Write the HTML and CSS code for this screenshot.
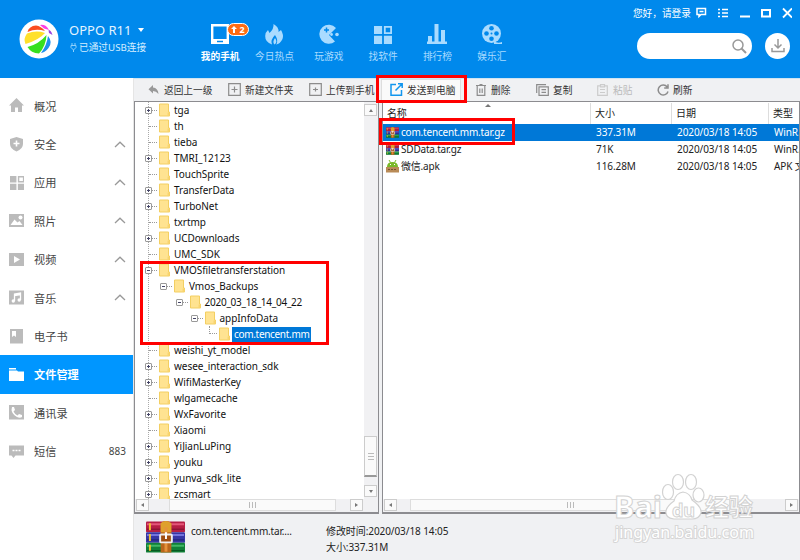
FILE: index.html
```html
<!DOCTYPE html>
<html lang="zh-CN">
<head>
    <meta charset="UTF-8">
    <meta name="viewport" content="width=device-width, initial-scale=1.0">
    <title>手机助手 - 文件管理</title>
    <link rel="stylesheet" href="styles.css">
</head>
<body>
    <!-- 图标 -->
    <svg class="symbols" width="0" height="0">
        <symbol id="chevron" viewBox="0 0 12 7"><path d="M1 6L6 1.2L11 6" fill="none" stroke="#999" stroke-width="1.3"/></symbol>
        <symbol id="grid" viewBox="0 0 20 20"><path d="M0 0h9v9H0zM0 11h9v9H0zM11 11h9v9h-9z"/><path d="M12 1h7v7h-7z" fill="none" stroke="currentColor" stroke-width="2"/></symbol>
        <symbol id="folder" viewBox="0 0 11 13"><path d="M.5.5h9v8h1v4H.5z" fill="#ffe391" stroke="#f3cf62"/><path d="M8.5 9h2v3.5h-2z" fill="#f8d470"/></symbol>
        <symbol id="rar" viewBox="0 0 40 34">
            <rect y="1" width="40" height="11" rx="1" fill="#b51f45"/><path d="M1 4h38" stroke="#e5577a" stroke-width="2"/><path d="M1 9h38" stroke="#7c1030"/>
            <rect y="12" width="40" height="11" rx="1" fill="#3636a4"/><path d="M1 15h38" stroke="#7474dc" stroke-width="2"/><path d="M1 20h38" stroke="#1f1f70"/>
            <rect y="23" width="40" height="10" rx="1" fill="#118138"/><path d="M1 26h38" stroke="#41b765" stroke-width="2"/><path d="M1 31h38" stroke="#07501f"/>
            <path d="M4 3v7M4 14v7M4 25v6" stroke="#f3c22e" stroke-width="2"/>
            <path d="M15 3q5-5 11 0v30H15z" fill="#b9661b"/><path d="M15 3q5-5 11 0v9H15z" fill="#dfa02c"/><path d="M20.500 7v25" stroke="#e5923b" stroke-width="3"/>
            <rect x="14.500" y="14.500" width="12" height="8" rx="1" fill="#a04d10" stroke="#eee" stroke-width="2"/><path d="M20.500 12v7" stroke="#fff" stroke-width="2"/>
        </symbol>
    </svg>

    <header class="header">
        <svg class="avatar" viewBox="0 0 40 40">
            <circle cx="20" cy="20" r="19.500" fill="#fff"/>
            <path d="M8.500 13Q10 7 17 6.500Q22 7 26 12Q17 9 8.500 13z" fill="#fb4d20"/>
            <path d="M8 14.500Q17 11 26 14Q20 21 6.500 25Q4 20 8 14.500z" fill="#ffe02a"/>
            <path d="M27.500 16Q27 27 20 34.500Q12 34 8.500 28Q20 25 27.500 16z" fill="#37e01f"/>
            <path d="M29 17Q34 23 29.500 29Q26 33.500 22 34Q28 26 29 17z" fill="#1f90ee"/>
            <path d="M21 6Q27 5 30 11L25 9.500z" fill="#fb3fe3"/>
            <path d="M29.500 11Q32 11 33.500 16L30 14z" fill="#9a44dd"/>
        </svg>
        <div class="device">
            <div class="device-name">OPPO R11<span class="caret"></span></div>
            <div class="device-state">
                <svg width="7" height="9" viewBox="0 0 7 9" fill="none" stroke="#8fd0fb"><path d="M2 0v2M5 0v2M1 2.500h5v2L3.500 7L1 4.500zM3.500 7v2"/></svg>
                <span>已通过USB连接</span>
            </div>
        </div>

        <ul class="nav">
            <li class="active">
                <svg width="20" height="22" viewBox="0 0 20 22"><path d="M2.200 2.200h15.600v17.600H2.200z" fill="none" stroke="#fff" stroke-width="2.400"/><path d="M2 16h16v4H2z"/><path d="M7 18.500h6" stroke="#0089ec" stroke-width="1.500"/></svg>
                <span>我的手机</span>
                <em class="badge"><svg width="6" height="7" viewBox="0 0 6 7"><path d="M3 0l3 3H4v4H2V3H0z"/></svg>2</em>
            </li>
            <li>
                <svg width="20" height="22" viewBox="0 0 20 22"><path d="M9.500 1Q15 4 14.500 9L17 7Q20 12 18.500 16Q16 21 12 21.500Q15 18 11 12Q6 17 8 21.500Q1 19 1.200 13Q1.500 9 4 7L5.500 10Q10 6 9.500 1zM11 15Q14 19 10.500 21.500Q8 19 11 15z"/></svg>
                <span>今日热点</span>
            </li>
            <li>
                <svg width="20" height="22" viewBox="0 0 20 22"><path d="M17 5A9.500 9.500 0 1 0 16 18.500L10 12z"/><path d="M5 7h5M7.500 4.500v5" stroke="#0089ec" stroke-width="1.500"/><circle cx="12.500" cy="11.500" r="1.400"/><circle cx="18" cy="11.500" r="1.800"/></svg>
                <span>玩游戏</span>
            </li>
            <li>
                <svg width="18" height="22" viewBox="0 -1 20 22"><use href="#grid"/></svg>
                <span>找软件</span>
            </li>
            <li>
                <svg width="20" height="22" viewBox="0 0 20 22"><path d="M1 13h4v6H1zM7.500 1h4v18h-4zM14 7h4v12h-4zM0 18.500h20V21H0z"/></svg>
                <span>排行榜</span>
            </li>
            <li>
                <svg width="20" height="22" viewBox="0 0 20 22"><circle cx="9.500" cy="10.500" r="9.500"/><path d="M12 18.500q4 2 8 .5v2h-8z"/><g fill="#0089ec"><circle cx="9.500" cy="5.300" r="2.300"/><circle cx="4.500" cy="10.500" r="2.300"/><circle cx="14.500" cy="10.500" r="2.300"/><circle cx="9.500" cy="15.700" r="2.300"/><circle cx="9.500" cy="10.500" r="1"/></g></svg>
                <span>娱乐汇</span>
            </li>
        </ul>

        <div class="header-right">
            <div class="window-bar">
                <span class="login">您好，请登录</span>
                <svg width="96" height="12" viewBox="0 0 96 12" fill="none" stroke="#fff" stroke-width="1.500">
                    <path d="M1 1.500h8.500v6H5L3 9.500v-2H1zM3.500 4.500h4"/>
                    <path d="M22 2.500h2M22 6h2M22 9.500h2M26 2.500h6M26 6h6M26 9.500h6"/>
                    <path d="M44 9.500h10" stroke-width="2"/>
                    <path d="M66 3h8v6.500h-8z" stroke-width="2"/>
                    <path d="M87 1.500l9 9M96 1.500l-9 9" stroke-width="1.800"/>
                </svg>
            </div>
            <div class="search-row">
                <div class="search"><svg width="15" height="15" viewBox="0 0 15 15" fill="none" stroke="#999"><circle cx="6" cy="6" r="5" stroke-width="1.500"/><path d="M9.500 9.500l4.500 4.500" stroke-width="2"/></svg></div>
                <div class="download"><svg width="14" height="14" viewBox="0 0 14 14" fill="none" stroke="#999" stroke-width="1.500"><path d="M7 0v8.500M3.500 5.500L7 9l3.500-3.500M1 9v3.500h12V9"/></svg></div>
            </div>
        </div>
    </header>

    <div class="container">
        <ul class="sidebar">
            <li><svg class="side-icon" viewBox="0 0 15 15"><path d="M7.500 0L15 7.500h-2V14H9V9.500H6V14H2V7.500H0z"/></svg><span>概况</span></li>
            <li><svg class="side-icon" viewBox="0 0 15 15"><path d="M7.500 0l6.500 2v5q0 5-6.500 7.500Q1 12 1 7V2z"/><path d="M4.500 6.500h6M7.500 3.500v6" stroke="#fff" stroke-width="1.600"/></svg><span>安全</span><svg class="chevron"><use href="#chevron"/></svg></li>
            <li><svg class="side-icon" viewBox="-1 -1 23 22"><use href="#grid"/></svg><span>应用</span><svg class="chevron"><use href="#chevron"/></svg></li>
            <li><svg class="side-icon" viewBox="0 0 15 15"><path d="M0 1h15v13H0z"/><path d="M1.500 12l4-5.500 3 3 2-1.500 3 4z" fill="#fff"/><circle cx="11.500" cy="4.500" r="2" fill="#fff"/></svg><span>照片</span><svg class="chevron"><use href="#chevron"/></svg></li>
            <li><svg class="side-icon" viewBox="0 0 15 15"><path d="M0 1h15v13H0z"/><path d="M5 4l6 3.500L5 11z" fill="#fff"/></svg><span>视频</span><svg class="chevron"><use href="#chevron"/></svg></li>
            <li><svg class="side-icon" viewBox="0 0 15 15"><path d="M0 .5h15v14H0z"/><path d="M5.500 11V4l6-1v7M5.500 5.500l6-1" fill="none" stroke="#fff" stroke-width="1.300"/><circle cx="4.300" cy="11" r="1.700" fill="#fff"/><circle cx="10.200" cy="10" r="1.700" fill="#fff"/></svg><span>音乐</span><svg class="chevron"><use href="#chevron"/></svg></li>
            <li><svg class="side-icon" viewBox="0 0 15 15"><path d="M1 0h13v14.500H1z"/><path d="M3 2h4v6L5 6.500 3 8z" fill="#fff"/></svg><span>电子书</span></li>
            <li class="active"><svg class="side-icon" viewBox="0 0 15 15"><path d="M0 1h7v1.500H0zM0 3.500h8l1 1h6V14H0z"/></svg><span>文件管理</span></li>
            <li><svg class="side-icon" viewBox="0 0 15 15"><path d="M0 0h15v14.500H0z"/><path d="M3 2l2 0 1 3-1.500 1.500q1.500 3 4 4L10 9l3 1v2q-2 1.500-5 0Q3 9 2.500 5z" fill="#fff"/></svg><span>通讯录</span></li>
            <li><svg class="side-icon" viewBox="0 0 15 15"><path d="M0 1.500h15v10H6.500L4.500 14 2.500 11.500H0z"/><path d="M3.500 6.500h2M6.500 6.500h2M9.500 6.500h2" stroke="#fff" stroke-width="1.600"/></svg><span>短信</span><b class="count">883</b></li>
        </ul>

        <div class="main">
            <div class="toolbar">
                <a class="tool back"><svg width="11" height="10" viewBox="0 0 11 10"><path d="M5 0v2.500q5 .5 5.500 6.500Q8 6 5 6v2.500L.5 4.200z" fill="#999"/></svg>返回上一级</a>
                <a class="tool new-folder"><svg width="13" height="13" viewBox="0 0 13 13"><path d="M.7.7h11.600v11.600H.7zM3.500 6.500h6M6.500 3.500v6"/></svg>新建文件夹</a>
                <a class="tool upload"><svg width="13" height="13" viewBox="0 0 13 13"><path d="M.7.7h11.600v11.600H.7zM4 6.500h5M6.500 4.500v4"/></svg>上传到手机</a>
                <a class="tool send"><svg width="13" height="13" viewBox="0 0 13 13"><path d="M6 1.500H1v10.700h10.500V7M5.500 7.500L12 1M8 .8h4.200V5"/></svg>发送到电脑</a>
                <a class="tool delete"><svg width="10" height="12" viewBox="0 0 10 12"><path d="M0 1.500h10M3.500.7h3M1.200 2v9.300h7.600V2M3.800 4.500v4.500M6.200 4.500v4.500"/></svg>删除</a>
                <a class="tool copy"><svg width="13" height="12" viewBox="0 0 13 12"><path d="M10 .6H.7V9M3 2.800h9.300v8.600H3zM5.500 5.700h4.500M5.500 8.300h4.500"/></svg>复制</a>
                <a class="tool paste"><svg width="11" height="12" viewBox="0 0 11 12"><path d="M3 1.800H.7v9.600h9.600V1.800H8M3.500.7h4v2.200h-4zM3 5.500h5M3 8.500h5"/></svg>粘贴</a>
                <a class="tool refresh"><svg width="12" height="12" viewBox="0 0 12 12"><path d="M10.200 3A5 5 0 1 0 11 7.500M11 .3V4H7.200" stroke-width="1.500"/></svg>刷新</a>
            </div>

            <div class="panels">
                <div class="panel tree-panel">
                    <div class="tree-body">
                        <ul class="tree">
                            <li class="plus"><svg><use href="#folder"/></svg><span>tga</span></li>
                            <li><svg><use href="#folder"/></svg><span>th</span></li>
                            <li><svg><use href="#folder"/></svg><span>tieba</span></li>
                            <li class="plus"><svg><use href="#folder"/></svg><span>TMRI_12123</span></li>
                            <li><svg><use href="#folder"/></svg><span>TouchSprite</span></li>
                            <li class="plus"><svg><use href="#folder"/></svg><span>TransferData</span></li>
                            <li class="plus"><svg><use href="#folder"/></svg><span>TurboNet</span></li>
                            <li><svg><use href="#folder"/></svg><span>txrtmp</span></li>
                            <li class="plus"><svg><use href="#folder"/></svg><span>UCDownloads</span></li>
                            <li><svg><use href="#folder"/></svg><span>UMC_SDK</span></li>
                            <li class="minus"><svg><use href="#folder"/></svg><span>VMOSfiletransferstation</span></li>
                            <li class="minus level-1"><svg><use href="#folder"/></svg><span>Vmos_Backups</span></li>
                            <li class="minus level-2"><svg><use href="#folder"/></svg><span>2020_03_18_14_04_22</span></li>
                            <li class="minus level-3"><svg><use href="#folder"/></svg><span>appInfoData</span></li>
                            <li class="level-4 selected"><svg><use href="#folder"/></svg><span>com.tencent.mm</span></li>
                            <li><svg><use href="#folder"/></svg><span>weishi_yt_model</span></li>
                            <li class="plus"><svg><use href="#folder"/></svg><span>wesee_interaction_sdk</span></li>
                            <li class="plus"><svg><use href="#folder"/></svg><span>WifiMasterKey</span></li>
                            <li><svg><use href="#folder"/></svg><span>wlgamecache</span></li>
                            <li class="plus"><svg><use href="#folder"/></svg><span>WxFavorite</span></li>
                            <li><svg><use href="#folder"/></svg><span>Xiaomi</span></li>
                            <li class="plus"><svg><use href="#folder"/></svg><span>YiJianLuPing</span></li>
                            <li class="plus"><svg><use href="#folder"/></svg><span>youku</span></li>
                            <li class="plus"><svg><use href="#folder"/></svg><span>yunva_sdk_lite</span></li>
                            <li class="plus"><svg><use href="#folder"/></svg><span>zcsmart</span></li>
                        </ul>
                        <div class="scroll-y"><i class="arrow up"></i><i class="thumb-y"></i><i class="arrow down"></i></div>
                    </div>
                    <div class="scroll-x"><i class="arrow left"></i><i class="thumb-x"></i><i class="arrow right"></i></div>
                </div>

                <div class="panel file-panel">
                    <i class="sort"></i>
                    <div class="files">
                        <div class="file-row file-head"><span>名称</span><span>大小</span><span>日期</span><span>类型</span></div>
                        <div class="file-row selected"><span><svg class="file-icon"><use href="#rar"/></svg>com.tencent.mm.tar.gz</span><span>337.31M</span><span>2020/03/18 14:05</span><span>WinR.</span></div>
                        <div class="file-row"><span><svg class="file-icon"><use href="#rar"/></svg>SDData.tar.gz</span><span>71K</span><span>2020/03/18 14:05</span><span>WinR.</span></div>
                        <div class="file-row"><span><svg class="file-icon" viewBox="0 0 13 13"><path d="M1 7Q1 2 6.500 2T12 7z" fill="#79b829"/><path d="M3 0l1.500 2.500M10 0L8.500 2.500" stroke="#79b829"/><path d="M4 4.500h1M8 4.500h1" stroke="#fff"/><path d="M0 7h13v5.500H0z" fill="#b98b57"/><path d="M2 9.500h9" stroke="#76502b" stroke-dasharray="2 1"/></svg>微信.apk</span><span>116.28M</span><span>2020/03/18 14:05</span><span>APK 文</span></div>
                    </div>
                    <div class="scroll-x"><i class="arrow left"></i><i class="thumb-x"></i><i class="arrow right"></i></div>
                </div>
            </div>

            <div class="detail">
                <svg class="detail-icon"><use href="#rar"/></svg>
                <div class="detail-name">com.tencent.mm.tar....</div>
                <div class="detail-info">
                    <p>修改时间:2020/03/18 14:05</p>
                    <p>大小:337.31M</p>
                </div>
            </div>
        </div>
    </div>

    <!-- 红框标注 -->
    <div class="mark mark-tree"></div>
    <div class="mark mark-send"></div>
    <div class="mark mark-file"></div>

    <!-- 水印 -->
    <svg class="watermark" width="148" height="76" viewBox="0 0 148 76">
        <g fill="#fff" stroke="#d2d2d2" stroke-width="1.200">
            <ellipse cx="57" cy="19" rx="5.500" ry="7.500"/><ellipse cx="67" cy="9" rx="5.500" ry="7.500"/>
            <ellipse cx="80" cy="9" rx="5.500" ry="7.500"/><ellipse cx="87.500" cy="22" rx="5.500" ry="7"/>
            <path d="M72 19Q79 20 81 27Q91 34 90 40Q88 46 81 46H63Q54 45 55 38Q56 33 63 28Q65 20 72 19z"/>
        </g>
        <g class="wm-text">
            <text x="3" y="45" font-size="31" textLength="48" lengthAdjust="spacingAndGlyphs">Bai</text>
            <text x="61" y="44" font-size="18" textLength="23">du</text>
            <text x="94" y="43" font-size="24" textLength="48" lengthAdjust="spacingAndGlyphs">经验</text>
        </g>
        <text class="wm-url" x="4" y="65" font-size="15.500" textLength="139" lengthAdjust="spacingAndGlyphs">jingyan.baidu.com</text>
    </svg>
</body>
</html>
```

FILE: styles.css
```css
*,
*::before,
*::after {
    margin: 0;
    padding: 0;
    box-sizing: border-box;
}

body {
    width: 800px;
    height: 560px;
    overflow: hidden;
    position: relative;
    background-color: #fff;
    color: #222;
    font-family: "Noto Sans", "Noto Sans CJK SC", sans-serif;
    font-size: 10px;
}

ul {
    list-style: none;
}

svg {
    display: block;
    flex-shrink: 0;
}

.symbols {
    position: absolute;
}

/* 顶部 */
.header {
    display: flex;
    height: 78px;
    background-color: #0089ec;
    color: #fff;
}

.avatar {
    width: 40px;
    height: 40px;
    margin: 19px 0 0 19px;
}

.device {
    width: 134px;
    padding: 21px 0 0 10px;
}

.device-name {
    display: flex;
    align-items: center;
    height: 18px;
    font-size: 13px;
    color: #e4f4ff;
}

.caret {
    margin-left: 7px;
    border: 3.5px solid transparent;
    border-top: 4px solid #fff;
    border-bottom: 0;
}

.device-state {
    display: flex;
    align-items: center;
    gap: 2px;
    height: 16px;
    font-size: 9.7px;
    color: #d3edff;
    padding-left: 1px;
    white-space: nowrap;
}

.nav {
    display: flex;
    padding-top: 23px;
    width: 326px;
}

.nav li {
    display: flex;
    flex-direction: column;
    align-items: center;
    gap: 3px;
    flex: 1;
    position: relative;
    color: #a9dbff;
    fill: currentColor;
    font-size: 9.7px;
    line-height: 17px;
    white-space: nowrap;
}

.nav li.active {
    color: #fff;
    font-weight: bold;
}

.badge {
    display: flex;
    align-items: center;
    justify-content: center;
    gap: 2px;
    position: absolute;
    left: 34px;
    top: 0;
    width: 22px;
    height: 13px;
    border: 1px solid #fff;
    border-radius: 7px;
    background-color: #ff6c12;
    font-style: normal;
    font-size: 9px;
}

.header-right {
    flex: 1;
}

.window-bar {
    display: flex;
    align-items: center;
    justify-content: flex-end;
    gap: 5px;
    height: 26px;
    padding-right: 8px;
}

.login {
    font-size: 9.7px;
    white-space: nowrap;
}

.search-row {
    display: flex;
    justify-content: flex-end;
    gap: 13px;
    padding: 7px 10px 0 0;
}

.search {
    display: flex;
    align-items: center;
    justify-content: flex-end;
    width: 115px;
    height: 26px;
    padding-right: 5px;
    border-radius: 13px;
    background-color: #fff;
}

.download {
    display: flex;
    align-items: center;
    justify-content: center;
    width: 25px;
    height: 26px;
    border-radius: 50%;
    background-color: #fff;
}

.container {
    display: flex;
    height: 482px;
}

/* 左侧菜单 */
.sidebar {
    width: 134px;
    padding-top: 8.5px;
    border-right: 1px solid #e5e5e5;
}

.sidebar li {
    display: flex;
    align-items: center;
    height: 38.4px;
    padding: 0 7px 0 8.5px;
    font-size: 11.2px;
    color: #444;
    fill: #bbb;
}

.side-icon {
    width: 15px;
    height: 15px;
    margin-right: 10.5px;
    color: #bbb;
}

.sidebar li.active {
    background-color: #0096ff;
    color: #fff;
    fill: #fff;
    font-weight: bold;
}

.chevron {
    width: 12px;
    height: 7px;
    margin-left: auto;
}

.count {
    margin-left: auto;
    font-size: 10px;
    font-weight: normal;
}

/* 工具栏 */
.main {
    display: flex;
    flex-direction: column;
    width: 666px;
    background-color: #f0f1f3;
}

.toolbar {
    display: flex;
    align-items: center;
    height: 23px;
    padding: 0 0 1px 14px;
    border-top: 1px solid #cfe4f3;
}

.tool {
    display: flex;
    align-items: center;
    gap: 4px;
    flex-shrink: 0;
    font-size: 9.7px;
    color: #333;
    white-space: nowrap;
}

.tool svg {
    fill: none;
    stroke: #8c8c8c;
    stroke-width: 1.2;
}

.tool.back svg {
    stroke: none;
}

.back {
    width: 80px;
    gap: 5px;
}

.new-folder {
    width: 81px;
}

.upload {
    width: 72px;
}

.send {
    width: 80px;
    height: 22px;
    margin-right: 15px;
    padding-left: 8px;
    background-color: #fafafa;
    border: 1px solid #ddd;
}

.tool.send svg {
    stroke: #1296ee;
    stroke-width: 1.5;
}

.delete {
    width: 60px;
    gap: 5px;
}

.copy {
    width: 61px;
}

.paste {
    width: 60px;
    gap: 5px;
    color: #bbb;
}

.tool.paste svg {
    stroke: #ccc;
}

/* 面板 */
.panels {
    display: flex;
    gap: 3px;
    height: 413px;
}

.panel {
    display: flex;
    flex-direction: column;
    position: relative;
    background-color: #fff;
    border: 1px solid #8c8c90;
    border-bottom-width: 2px;
    overflow: hidden;
}

.tree-panel {
    width: 245px;
}

.file-panel {
    width: 418px;
}

.tree-body {
    display: flex;
    height: 397px;
    overflow: hidden;
}

.tree {
    flex: 1;
    padding-left: 14px;
    background: repeating-linear-gradient(#aaa 0 1px, transparent 1px 2px) 13px 0 / 1px 100% no-repeat;
    letter-spacing: -0.05px;
}

.tree li {
    display: flex;
    align-items: center;
    height: 16px;
    position: relative;
    white-space: nowrap;
    color: #111;
}

.tree li::before {
    content: "";
    width: 8px;
    margin-right: 2px;
    border-top: 1px dotted #999;
}

.tree svg {
    width: 11px;
    height: 14px;
}

.tree span {
    margin-left: 2px;
    padding: 0 2px;
    line-height: 15px;
}

.plus::after,
.minus::after {
    content: "";
    position: absolute;
    left: -4px;
    top: 5px;
    width: 7px;
    height: 7px;
    border: 1px solid #999;
    border-radius: 1px;
    background: linear-gradient(#446, #446) center / 3px 1px no-repeat, linear-gradient(#446, #446) center / 1px 3px no-repeat, #fff;
}

.tree .minus::after {
    background: linear-gradient(#446, #446) center / 3px 1px no-repeat, #fff;
}

.level-1 {
    left: 15px;
}

.level-2 {
    left: 30.5px;
    letter-spacing: -0.25px;
}

.level-3 {
    left: 45.5px;
}

.level-4 {
    left: 60px;
    letter-spacing: -0.32px;
}

.level-4::before {
    height: 8px;
    margin-top: -8px;
}

.tree li.level-4::before {
    border-top: 0;
    border-left: 1px dotted #999;
    border-bottom: 1px dotted #999;
}

.tree li.selected {
    color: #fff;
}

.tree .selected span {
    background-color: #0078d7;
}

/* 滚动条 */
.scroll-y {
    display: flex;
    flex-direction: column;
    width: 14px;
    padding: 2px 1px 1px 0;
    background-color: #f1f1f3;
}

.scroll-x {
    display: flex;
    height: 13px;
    margin-top: auto;
    padding: 0 1px;
    background-color: #f1f1f3;
}

.tree-panel .scroll-x {
    padding-right: 15px;
}

.arrow,
.thumb-x,
.thumb-y {
    display: flex;
    align-items: center;
    justify-content: center;
    flex-shrink: 0;
    background-color: #fafafa;
    border: 1px solid #ccc;
}

.arrow {
    width: 13px;
    height: 12px;
}

.arrow::before {
    content: "";
    border: 2px solid transparent;
}

.up::before {
    border-bottom: 3px solid #777;
    border-top: 0;
}

.down::before {
    border-top: 3px solid #777;
    border-bottom: 0;
}

.left::before {
    border-right: 3px solid #777;
    border-left: 0;
}

.right::before {
    border-left: 3px solid #777;
    border-right: 0;
}

.right {
    margin-left: auto;
}

.thumb-y {
    width: 13px;
    height: 41px;
    margin-top: 320px;
    margin-bottom: 8px;
    border-bottom: 2px solid #999;
}

.thumb-x {
    width: 167px;
    height: 12px;
    margin-left: 20px;
    border-color: #ddd;
}

.file-panel .thumb-x {
    width: 320px;
    margin-left: 13px;
}

.thumb-x::before {
    content: "";
    width: 7px;
    height: 6px;
    background: repeating-linear-gradient(90deg, #bbb 0 1px, transparent 1px 3px);
}

.thumb-y::before {
    content: "";
    width: 6px;
    height: 7px;
    background: repeating-linear-gradient(#bbb 0 1px, transparent 1px 3px);
}

/* 文件列表 */
.sort {
    position: absolute;
    left: 102px;
    top: 2px;
    border: 3px solid transparent;
    border-top: 0;
    border-bottom: 3px solid #777;
}

.file-row {
    display: grid;
    grid-template-columns: 209px 81px 97px 27px;
    height: 17px;
    padding-left: 3px;
    line-height: 17px;
    letter-spacing: -0.08px;
}

.file-row span {
    display: flex;
    align-items: center;
    padding-left: 1px;
    white-space: nowrap;
}

.file-row span:first-child {
    padding-left: 0;
    gap: 2px;
    letter-spacing: -0.2px;
}

.file-row span:last-child {
    letter-spacing: -0.1px;
}

.file-head {
    height: 22px;
    padding-top: 1px;
}

.file-head span {
    background: linear-gradient(#ddd, #ddd) right 4px top 0 / 1px 100% no-repeat;
    padding-left: 0;
}

.file-row.file-head span:first-child {
    padding-left: 1px;
}

.file-head span:last-child {
    background: none;
}

.file-row.selected {
    background-color: #0078d7;
    color: #fff;
}

.file-icon {
    width: 13px;
    height: 13px;
}

/* 底部信息 */
.detail {
    display: flex;
    padding: 6px 0 0 12px;
    line-height: 16px;
}

.detail-icon {
    width: 39px;
    height: 34px;
}

.detail-name {
    width: 141px;
    padding: 3px 0 0 6px;
    letter-spacing: -0.2px;
}

.detail-info {
    padding-top: 3px;
    letter-spacing: -0.08px;
}

/* 标注框 */
.mark {
    position: absolute;
    border: 3px solid #ff0000;
}

.mark-tree {
    left: 140px;
    top: 261px;
    width: 189px;
    height: 84px;
}

.mark-send {
    left: 376px;
    top: 75px;
    width: 91px;
    height: 28px;
}

.mark-file {
    left: 379px;
    top: 118px;
    width: 136px;
    height: 27px;
}

.watermark {
    position: absolute;
    left: 611px;
    top: 473px;
}

.wm-text {
    font-weight: bold;
    fill: #fff;
    stroke: #d2d2d2;
    stroke-width: 1px;
}

.wm-url {
    fill: #fff;
    stroke: #d6d6d6;
    stroke-width: 2px;
    paint-order: stroke;
}
```
